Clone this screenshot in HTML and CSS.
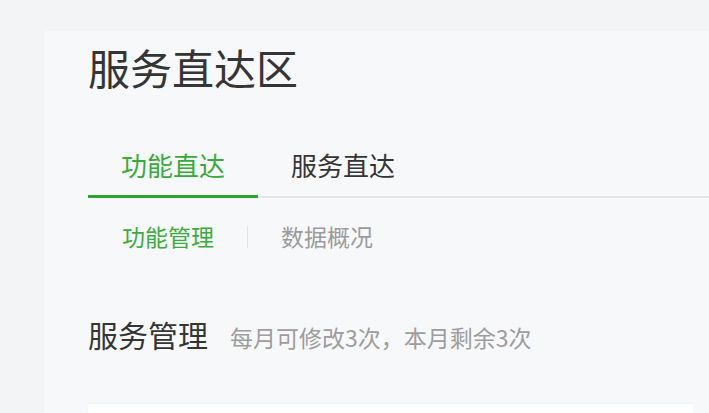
FILE: index.html
```html
<!DOCTYPE html>
<html lang="zh-CN">
<head>
<meta charset="utf-8">
<title>服务直达区</title>
<link rel="stylesheet" href="styles.css">
</head>
<body>
<div class="panel">
  <h1 class="page-title">服务直达区</h1>
  <div class="tabs">
    <div class="tab active">功能直达</div>
    <div class="tab">服务直达</div>
  </div>
  <div class="subnav">
    <span class="subnav-item active">功能管理</span>
    <span class="subnav-sep"></span>
    <span class="subnav-item">数据概况</span>
  </div>
  <div class="section-head">
    <h2 class="section-title">服务管理</h2>
    <span class="section-tip">每月可修改3次，本月剩余3次</span>
  </div>
  <div class="card"></div>
</div>
</body>
</html>
```

FILE: styles.css
```css
html, body {
  margin: 0;
  padding: 0;
  background: #f3f4f6;
  font-family: "Noto Sans CJK SC", "Noto Sans", sans-serif;
  overflow: hidden;
}

.panel {
  margin: 31px 0 0 44px;
  padding: 0 16px 0 44px;
  background: #f7f8fa;
  min-height: 400px;
}

.page-title {
  margin: 0;
  padding-top: 15px;
  font-size: 42px;
  line-height: 42px;
  font-weight: 400;
  color: #353535;
}

.tabs {
  display: flex;
  margin: 64px -16px 0 0;
  border-bottom: 2px solid #e4e6e9;
}

.tab {
  width: 170px;
  text-align: center;
  font-size: 26px;
  line-height: 26px;
  color: #353535;
  padding-bottom: 17px;
  border-bottom: 3px solid transparent;
  margin-bottom: -2px;
}

.tab.active {
  color: #36ab3a;
  border-bottom-color: #2ba530;
}

.subnav {
  display: flex;
  align-items: center;
  gap: 33px;
  padding-left: 34px;
  margin-top: 27px;
}

.subnav-item {
  font-size: 23px;
  line-height: 23px;
  color: #9b9b9b;
}

.subnav-item.active {
  color: #3aad3c;
}

.subnav-sep {
  width: 1px;
  height: 22px;
  background: #e3e4e6;
}

.section-head {
  display: flex;
  align-items: baseline;
  margin-top: 71px;
  height: 30px;
}

.section-title {
  margin: 0;
  font-size: 30px;
  line-height: 30px;
  font-weight: 400;
  color: #353535;
}

.section-tip {
  margin-left: 22px;
  font-size: 23px;
  line-height: 30px;
  color: #9d9d9d;
}

.card {
  margin-top: 55px;
  height: 200px;
  background: #ffffff;
  box-shadow: 0 -1px 2px rgba(0, 0, 0, 0.03);
}
```
